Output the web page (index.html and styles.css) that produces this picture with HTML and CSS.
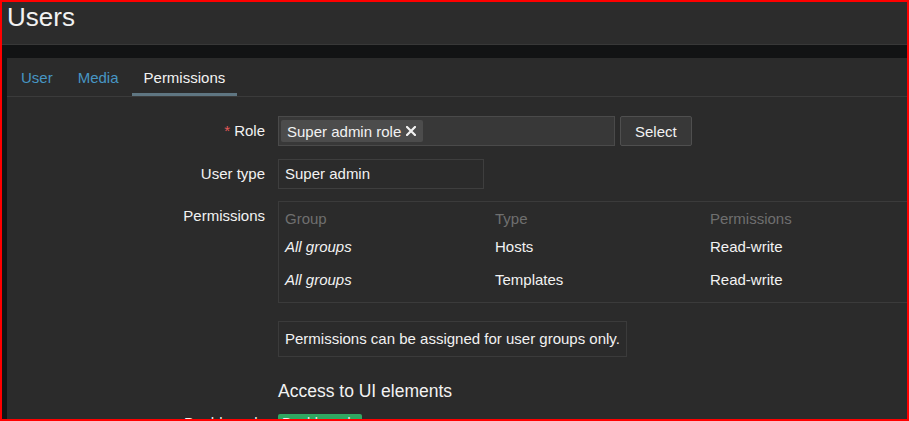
FILE: index.html
```html
<!DOCTYPE html>
<html lang="en">
<head>
    <meta charset="UTF-8">
    <meta name="viewport" content="width=device-width, initial-scale=1.0">
    <title>Users</title>
    <link rel="stylesheet" href="styles.css">
</head>
<body>
    <header class="pageHeader">
        <h1>Users</h1>
    </header>

    <main class="wrapper">
        <div class="container">
            <ul class="tabs">
                <li><a href="#">User</a></li>
                <li><a href="#">Media</a></li>
                <li class="active"><a href="#">Permissions</a></li>
            </ul>

            <div class="form">
                <div class="formRow">
                    <label class="formLabel"><span class="required">*</span> Role</label>
                    <div class="formField">
                        <div class="multiselect">
                            <span class="chip">Super admin role
                                <svg class="chipRemove" width="10" height="10" viewBox="0 0 10 10">
                                    <path d="M1 1 L9 9 M9 1 L1 9" stroke="#f2f2f2" stroke-width="2.2" stroke-linecap="square"/>
                                </svg>
                            </span>
                        </div>
                        <button class="btnAlt">Select</button>
                    </div>
                </div>

                <div class="formRow">
                    <label class="formLabel">User type</label>
                    <div class="formField">
                        <div class="readonlyField">Super admin</div>
                    </div>
                </div>

                <div class="formRow">
                    <label class="formLabel">Permissions</label>
                    <div class="formField">
                        <div class="tableBox">
                            <table class="permTable">
                                <thead>
                                    <tr><th class="colGroup">Group</th><th class="colType">Type</th><th>Permissions</th></tr>
                                </thead>
                                <tbody>
                                    <tr><td><em>All groups</em></td><td>Hosts</td><td>Read-write</td></tr>
                                    <tr><td><em>All groups</em></td><td>Templates</td><td>Read-write</td></tr>
                                </tbody>
                            </table>
                        </div>
                    </div>
                </div>

                <div class="formRow infoRow">
                    <label class="formLabel"></label>
                    <div class="formField">
                        <div class="infoBox">Permissions can be assigned for user groups only.</div>
                    </div>
                </div>

                <div class="formRow headingRow">
                    <label class="formLabel"></label>
                    <div class="formField">
                        <h2>Access to UI elements</h2>
                    </div>
                </div>

                <div class="formRow tagRow">
                    <label class="formLabel">Dashboards</label>
                    <div class="formField">
                        <span class="tagGreen">Dashboards</span>
                    </div>
                </div>
            </div>
        </div>
    </main>
</body>
</html>
```

FILE: styles.css
```css
* {
    box-sizing: border-box;
    padding: 0;
    margin: 0;
}

html {
    color: #f2f2f2;
    font-family: "Liberation Sans", Arial, sans-serif;
    font-size: 15px;
}
body {
    height: 100vh;
    overflow: hidden;
    border: 2px solid #ff0000;
    background-color: #121314;
}

.pageHeader {
    height: 43px;
    padding-left: 5px;
    background-color: #2c2c2c;
    border-bottom: 1px solid #383838;
}
.pageHeader h1 {
    font-size: 26px;
    font-weight: normal;
    line-height: 30px;
}

.wrapper {
    padding: 13px 0 0 5px;
}
.container {
    background-color: #2b2b2b;
    min-height: 400px;
    width: 1000px;
}

/* tabs */
.tabs {
    display: flex;
    gap: 1px;
    list-style: none;
    padding-left: 2px;
    border-bottom: 1px solid #3b3b3b;
}
.tabs li {
    display: flex;
    align-items: center;
    height: 38px;
    padding: 0 12px;
}
.tabs a {
    color: #4796c4;
    text-decoration: none;
}
.tabs .active {
    box-shadow: inset 0 -3px 0 #5f7682;
}
.tabs .active a {
    color: #f2f2f2;
}

/* form */
.form {
    padding-top: 19px;
}
.formRow {
    display: flex;
    margin-bottom: 12px;
}
.formRow:first-child {
    margin-bottom: 13px;
}
.infoRow {
    margin-top: 18px;
    margin-bottom: 24px;
}
.formLabel {
    width: 258px;
    flex-shrink: 0;
    text-align: right;
    line-height: 30px;
}
.required {
    color: #e45959;
}
.formField {
    display: flex;
    margin-left: 13px;
}

.multiselect {
    width: 337px;
    height: 30px;
    padding: 3px 2px;
    background-color: #383838;
    border: 1px solid #4a4a4a;
}
.chip {
    display: inline-flex;
    align-items: center;
    gap: 5px;
    height: 22px;
    padding: 0 7px 0 6px;
    background-color: #4c4c4c;
    border-radius: 2px;
}
.btnAlt {
    height: 30px;
    margin-left: 5px;
    padding: 0 14px;
    font-family: inherit;
    font-size: 15px;
    color: #f2f2f2;
    background-color: #383838;
    border: 1px solid #4f4f4f;
    border-radius: 2px;
}

.readonlyField {
    width: 206px;
    height: 30px;
    padding-left: 6px;
    line-height: 28px;
    border: 1px solid #3e3e3e;
}

.tableBox {
    width: 700px;
    padding-bottom: 4px;
    border: 1px solid #3b3b3b;
}
.permTable {
    width: 100%;
    border-collapse: collapse;
}
.permTable th {
    padding: 8px 6px 4px;
    line-height: 18px;
    font-weight: normal;
    text-align: left;
    color: #6f6f6f;
}
.permTable td {
    padding: 6px 6px 9px;
    line-height: 18px;
}
.colGroup {
    width: 210px;
}
.colType {
    width: 215px;
}

.infoBox {
    padding: 0 6px;
    line-height: 34px;
    border: 1px solid #3b3b3b;
}

.headingRow {
    margin-bottom: 12px;
}
.formField h2 {
    font-size: 17.5px;
    font-weight: normal;
    line-height: 21px;
}

.tagRow .formLabel {
    line-height: 18px;
}
.tagGreen {
    display: inline-block;
    height: 18px;
    padding: 0 4px;
    font-size: 14px;
    line-height: 18px;
    background-color: #2fa862;
    border-radius: 2px;
}
```
